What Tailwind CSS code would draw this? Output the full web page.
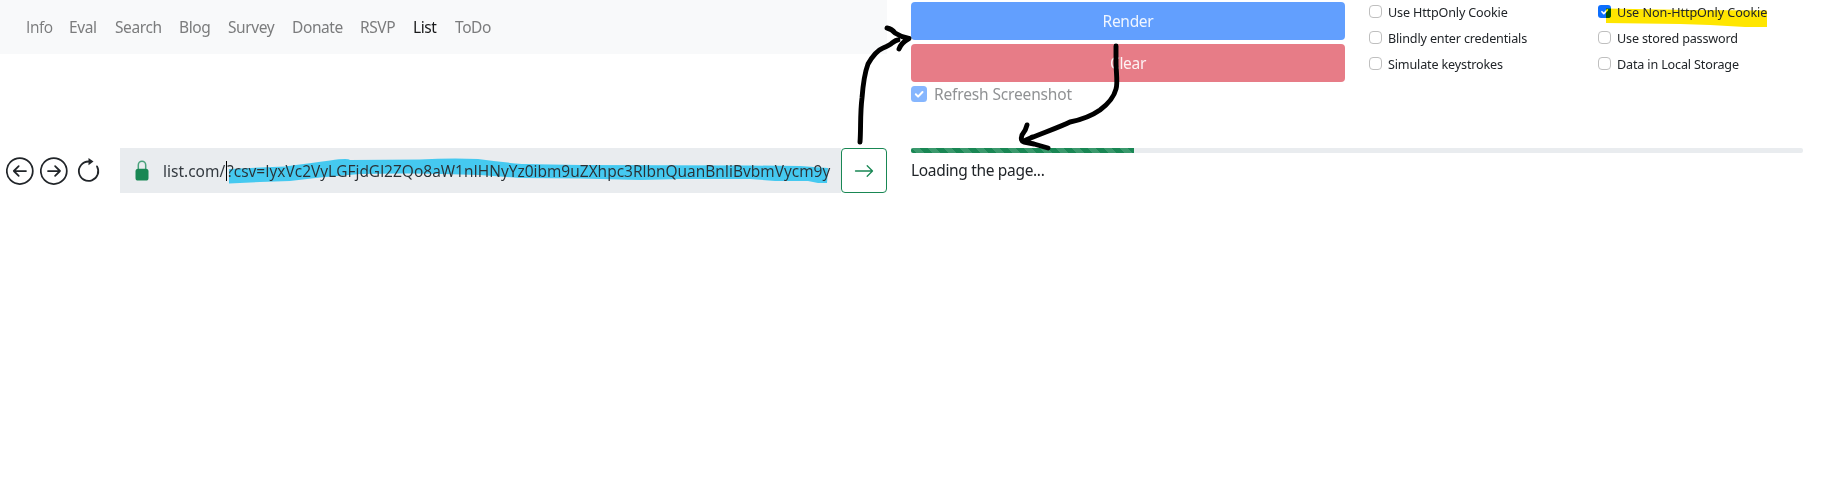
<!DOCTYPE html>
<html lang="en">
<head>
<meta charset="utf-8">
<title>List</title>
<script src="https://cdn.jsdelivr.net/npm/@tailwindcss/browser@4"></script>
</head>
<body class="relative flex h-[496px] w-[1840px] gap-6 overflow-hidden bg-white font-['Noto_Sans',sans-serif] text-[15.5px] leading-6 text-[#212529]">
  <section class="w-[887px] shrink-0">
    <nav class="flex h-[54px] items-center bg-[#f8f9fa] pb-px pl-[26px] tracking-[-0.4px] whitespace-nowrap text-[#7b7c7d]">
      <a class="w-[43px] font-['Open_Sans',sans-serif]">Info</a>
      <a class="w-[46px]">Eval</a>
      <a class="w-16">Search</a>
      <a class="w-[49px]">Blog</a>
      <a class="w-16">Survey</a>
      <a class="w-[68px]">Donate</a>
      <a class="w-[53px]">RSVP</a>
      <a class="w-[42px] text-[#191a1b]">List</a>
      <a>ToDo</a>
    </nav>
    <div class="mt-[94px] flex h-[45px] items-center">
      <div class="flex w-[120px] shrink-0 items-center gap-[6px] pl-[6px]">
        <svg class="size-7" viewBox="0 0 28 28" fill="none" stroke="#212529" stroke-width="1.75" stroke-linecap="round" stroke-linejoin="round"><circle cx="13.8" cy="14" r="13"/><path d="M20 14H8M12.7 9.2 7.8 14l4.9 4.8"/></svg>
        <svg class="size-7" viewBox="0 0 28 28" fill="none" stroke="#212529" stroke-width="1.75" stroke-linecap="round" stroke-linejoin="round"><circle cx="13.8" cy="14" r="13"/><path d="M8 14h12M15.1 9.2l4.9 4.8-4.9 4.8"/></svg>
        <svg class="ml-px size-7" viewBox="0 0 28 28" fill="none" stroke="#212529" stroke-width="1.8"><path d="M13.5 4.5A9.700 9.700 0 1 0 22 9.400" stroke-linecap="round"/><path d="M13.500 1v7.200l5-3.600z" fill="#212529" stroke="none"/></svg>
      </div>
      <div class="flex h-full w-[721px] shrink-0 items-center overflow-hidden bg-[#e9ecef] pl-[15px] whitespace-nowrap">
        <svg class="mr-[14px] h-[21px] w-[14px] shrink-0" viewBox="0 0 14 21"><path d="M3.300 10V5a3.700 3.700 0 0 1 7.400 0v5" fill="none" stroke="#4aa27c" stroke-width="1.500"/><rect x=".5" y="8.800" width="13" height="11.700" rx="2.600" fill="#198754"/></svg>
        <span class="relative z-10 w-[63px] shrink-0 pt-px text-[#343a40]">list.com/</span><span class="relative z-10 h-5 w-px shrink-0 bg-black"></span><span class="relative z-10 pt-px font-['Open_Sans',sans-serif] tracking-[0.015px] text-[#2b3034]">?csv=IyxVc2VyLGFjdGl2ZQo8aW1nIHNyYz0ibm9uZXhpc3RlbnQuanBnIiBvbmVycm9y</span>
      </div>
      <button class="flex h-full w-[46px] shrink-0 items-center justify-center rounded border border-[#198754] bg-white">
        <svg class="size-[20px]" viewBox="0 0 20 20" fill="none" stroke="#198754" stroke-width="1.300" stroke-linecap="round" stroke-linejoin="round"><path d="M1.500 10h17M13.200 4.800l5.300 5.200-5.300 5.200"/></svg>
      </button>
    </div>
  </section>

  <section class="w-[892px] shrink-0 pt-[2px]">
    <div class="flex h-[146px]">
      <div class="w-[434px] shrink-0 tracking-[-0.3px]">
        <button class="block h-[38px] w-full rounded bg-[#629ffe] text-white/90">Render</button>
        <button class="mt-1 block h-[38px] w-full rounded bg-[#e77c87] text-white/90">Clear</button>
        <label class="flex items-center gap-[7px] tracking-[-0.15px] text-[#909294]">
          <svg class="size-4" viewBox="0 0 16 16"><rect width="16" height="16" rx="3.500" fill="#86b6fe"/><path d="m4.800 8.300 2.300 2.300 4.400-4.600" fill="none" stroke="#fff" stroke-width="2" stroke-linecap="round" stroke-linejoin="round"/></svg>
          <span>Refresh Screenshot</span>
        </label>
      </div>
      <div class="ml-6 grid h-[78px] shrink-0 grid-cols-[229px_210px] grid-rows-3 text-[12.600px] tracking-[-0.16px] whitespace-nowrap [&>label]:flex [&>label]:items-center [&>label]:gap-[6px] [&>label]:pb-[7px] [&_span]:pt-[2px]">
        <label><i class="size-[13px] rounded-[4px] border border-[#bfbfbf]"></i><span>Use HttpOnly Cookie</span></label>
        <label><svg class="size-[13px]" viewBox="0 0 13 13"><rect width="13" height="13" rx="3" fill="#0d6efd"/><path d="M13 3.500V10a3 3 0 0 1-3 3H8V8z" fill="#04560a"/><path d="m3.900 6.700 1.900 1.900 3.500-3.700" fill="none" stroke="#fff" stroke-width="1.600" stroke-linecap="round" stroke-linejoin="round"/></svg><span class="relative z-10 tracking-[-0.060px]">Use Non-HttpOnly Cookie</span></label>
        <label><i class="size-[13px] rounded-[4px] border border-[#bfbfbf]"></i><span>Blindly enter credentials</span></label>
        <label><i class="size-[13px] rounded-[4px] border border-[#bfbfbf]"></i><span>Use stored password</span></label>
        <label><i class="size-[13px] rounded-[4px] border border-[#bfbfbf]"></i><span>Simulate keystrokes</span></label>
        <label><i class="size-[13px] rounded-[4px] border border-[#bfbfbf]"></i><span>Data in Local Storage</span></label>
      </div>
    </div>
    <div class="h-[5px] overflow-hidden rounded-[2px] bg-[#e9ecef]">
      <div class="h-full w-[223px] bg-[#198754] bg-[linear-gradient(45deg,#ffffff26_25%,transparent_25%,transparent_50%,#ffffff26_50%,#ffffff26_75%,transparent_75%,transparent)] bg-[length:16px_16px]"></div>
    </div>
    <p class="mt-[5px] tracking-[-0.33px]">Loading the page...</p>
  </section>

  <!-- Highlighter strokes and hand-drawn arrows over the page -->
  <svg class="pointer-events-none absolute inset-0 h-[496px] w-[1840px]" viewBox="0 0 1840 496" fill="none">
    <path d="M229 169 260 167.500 285 166.500Q312 163 330 160.500T350 160L420 159.500Q450 158 478 159Q500 162 522 164L580 165 750 165.500 800 166 828 168 827 183 818 183 808 181 775 181 750 179 680 179 640 180 580 178.500 520 178 480 175Q430 173 400 173.500L360 174 320 177.500 290 181 260 182 229 183.500z" fill="#45c9f0"/>
    <g class="mix-blend-multiply"><path d="M1606 8.500 1690 10 1767 10.500 1767 27 1745 27 1710 25 1680 24 1606 23z" fill="#ffe600"/></g>
    <g stroke="#000" stroke-width="4.900" stroke-linecap="round" stroke-linejoin="round">
      <path d="M860 142C861 130 860 113 862 98C863 85 865 72 868 64C872 57 878 50 883 48Q890 45 892 43Q896 40 898 40M887 28Q892 29 895 33Q901 37 909 38.500Q901 43 899 49"/>
      <path d="M1116 46V62C1116 72 1118 83 1116 89C1114 97 1108 104 1100 110C1090 117 1080 120 1070 122C1060 127 1040 134 1026 140M1027 125Q1026 130 1022 135Q1020 141 1024 142L1034 144 1048 148M1024 142 1032 137"/>
    </g>
  </svg>
</body>
</html>
